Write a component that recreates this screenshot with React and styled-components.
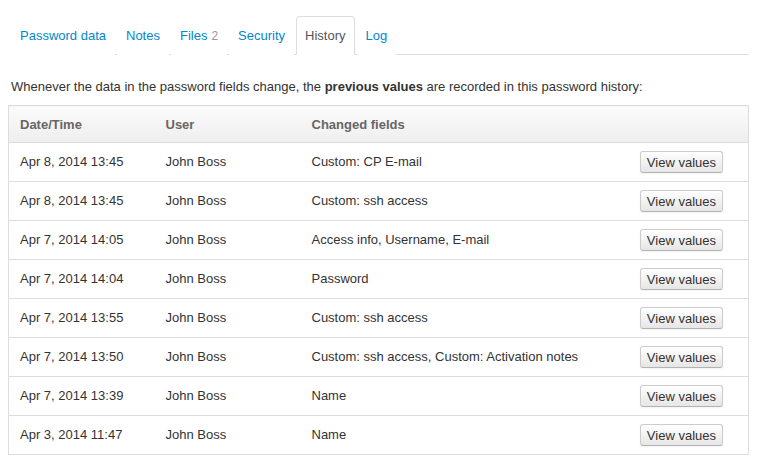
import React from "react";
import styled, { createGlobalStyle } from "styled-components";

const GlobalStyle = createGlobalStyle`
  body {
    margin: 0;
    background: #fff;
    font-family: "Liberation Sans", Arial, sans-serif;
    font-size: 13px;
    color: #333;
  }
`;

const tabs = [
  { label: "Password data" },
  { label: "Notes" },
  { label: "Files", count: 2 },
  { label: "Security" },
  { label: "History", active: true },
  { label: "Log" },
];

const rows = [
  ["Apr 8, 2014 13:45", "John Boss", "Custom: CP E-mail"],
  ["Apr 8, 2014 13:45", "John Boss", "Custom: ssh access"],
  ["Apr 7, 2014 14:05", "John Boss", "Access info, Username, E-mail"],
  ["Apr 7, 2014 14:04", "John Boss", "Password"],
  ["Apr 7, 2014 13:55", "John Boss", "Custom: ssh access"],
  ["Apr 7, 2014 13:50", "John Boss", "Custom: ssh access, Custom: Activation notes"],
  ["Apr 7, 2014 13:39", "John Boss", "Name"],
  ["Apr 3, 2014 11:47", "John Boss", "Name"],
];

export default function App() {
  return (
    <Page>
      <GlobalStyle />
      <Tabs>
        {tabs.map((t) => (
          <Tab key={t.label} $active={t.active}>
            {t.label}
            {t.count && <Count>{t.count}</Count>}
          </Tab>
        ))}
      </Tabs>
      <Intro>
        Whenever the data in the password fields change, the{" "}
        <b>previous values</b> are recorded in this password history:
      </Intro>
      <Table>
        <colgroup>
          <col style={{ width: 146 }} />
          <col style={{ width: 146 }} />
          <col />
          <col style={{ width: 120 }} />
        </colgroup>
        <thead>
          <tr>
            <Th>Date/Time</Th>
            <Th>User</Th>
            <Th>Changed fields</Th>
            <Th />
          </tr>
        </thead>
        <tbody>
          {rows.map((r, i) => (
            <tr key={i}>
              <Td>{r[0]}</Td>
              <Td>{r[1]}</Td>
              <Td>{r[2]}</Td>
              <Td>
                <Button>View values</Button>
              </Td>
            </tr>
          ))}
        </tbody>
      </Table>
    </Page>
  );
}

const Page = styled.div`
  padding: 16px 11px 0 8px;
`;

const Tabs = styled.ul`
  display: flex;
  list-style: none;
  margin: 0 0 0 3px;
  padding: 0;
  border-bottom: 1px solid #ddd;
`;

const Tab = styled.li`
  height: 37px;
  line-height: 37px;
  padding: 0 8px;
  margin: 0 2px -1px 0;
  font-size: 13px;
  color: ${(p) => (p.$active ? "#555" : "#0088cc")};
  background: #fff;
  border: 1px solid ${(p) => (p.$active ? "#ddd" : "transparent")};
  border-bottom-color: transparent;
  border-radius: 4px 4px 0 0;
  cursor: pointer;
`;

const Count = styled.span`
  margin-left: 4px;
  color: #999;
  font-size: 12px;
`;

const Intro = styled.p`
  margin: 23px 0 9px 3px;
  line-height: 18px;
  b {
    font-weight: bold;
  }
`;

const Table = styled.table`
  width: 741px;
  table-layout: fixed;
  border-collapse: collapse;
  border: 1px solid #ddd;
`;

const Th = styled.th`
  height: 35px;
  padding: 1px 0 0 11px;
  text-align: left;
  font-weight: bold;
  color: #666;
  background: linear-gradient(#fbfbfb, #eeeeee);
`;

const Td = styled.td`
  height: 36px;
  padding: 0 0 2px 11px;
  border-top: 1px solid #ddd;
  white-space: nowrap;
  &:last-child {
    padding: 0 25px 0 0;
    text-align: right;
  }
`;

const Button = styled.button`
  height: 22px;
  padding: 0 6px;
  font-family: "Liberation Sans", Arial, sans-serif;
  font-size: 13px;
  color: #333;
  background: linear-gradient(#ffffff, #e6e6e6);
  border: 1px solid #ccc;
  border-bottom-color: #b3b3b3;
  border-radius: 3px;
  box-shadow: inset 0 1px 0 rgba(255, 255, 255, 0.2), 0 1px 2px rgba(0, 0, 0, 0.05);
  cursor: pointer;
`;
